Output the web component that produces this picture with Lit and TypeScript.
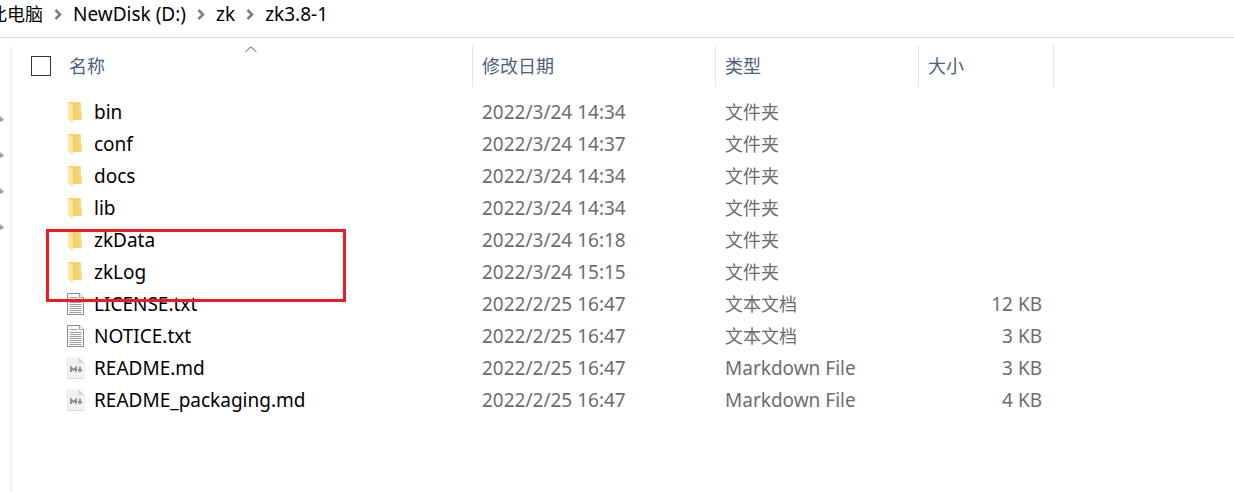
import { LitElement, html, css, svg } from "lit";
import { customElement } from "lit/decorators.js";

type Kind = "folder" | "text" | "markdown";
interface Entry {
  name: string;
  modified: string;
  kind: Kind;
  size?: string;
}

const TYPE_LABEL: Record<Kind, string> = {
  folder: "文件夹",
  text: "文本文档",
  markdown: "Markdown File",
};

const ENTRIES: Entry[] = [
  { name: "bin", modified: "2022/3/24 14:34", kind: "folder" },
  { name: "conf", modified: "2022/3/24 14:37", kind: "folder" },
  { name: "docs", modified: "2022/3/24 14:34", kind: "folder" },
  { name: "lib", modified: "2022/3/24 14:34", kind: "folder" },
  { name: "zkData", modified: "2022/3/24 16:18", kind: "folder" },
  { name: "zkLog", modified: "2022/3/24 15:15", kind: "folder" },
  { name: "LICENSE.txt", modified: "2022/2/25 16:47", kind: "text", size: "12 KB" },
  { name: "NOTICE.txt", modified: "2022/2/25 16:47", kind: "text", size: "3 KB" },
  { name: "README.md", modified: "2022/2/25 16:47", kind: "markdown", size: "3 KB" },
  { name: "README_packaging.md", modified: "2022/2/25 16:47", kind: "markdown", size: "4 KB" },
];

@customElement("file-icon")
class FileIcon extends LitElement {
  static properties = { kind: { type: String } };
  declare kind: Kind;
  static styles = css`
    :host { display: block; width: 20px; height: 24px; flex: none; }
    svg { display: block; }
  `;
  render() {
    const art = {
      folder: svg`
        <defs>
          <linearGradient id="back" x1="0" x2="1"><stop offset="0" stop-color="#ecc75e"/><stop offset="1" stop-color="#fadb80"/></linearGradient>
          <linearGradient id="front" x1="0" x2="1"><stop offset="0" stop-color="#ffe8a0"/><stop offset="1" stop-color="#fde49a"/></linearGradient>
        </defs>
        <path d="M1 2H14V11L15 12V20H5Z" fill="url(#back)"/>
        <path d="M1 2L6 4V22.600L4.500 22L1 19.500Z" fill="url(#front)"/>`,
      text: svg`
        <path d="M.5 1.500H13L16.500 5.500V22.500H.5Z" fill="#fbfbfb" stroke="#8b8b8b"/>
        <path d="M12.500 1.500V5.500H16.500" fill="#fff" stroke="#9b9b9b"/>
        <path d="M2.500 5.500H10.500M2.500 8.500H14.500M2.500 10.500H14.500M2.500 12.500H14.500M2.500 14.500H14.500M2.500 16.500H14.500M2.500 18.500H14.500M2.500 20.500H14.500" stroke="#9a9fa0" fill="none"/>`,
      markdown: svg`
        <path d="M1 2H12L17.500 7.500V22Q17.500 23 16.500 23H1Q0 23 0 22V3Q0 2 1 2Z" fill="#dfdfdf"/>
        <path d="M1.500 1H12L17 6.500V21Q17 22 16 22H1.500Q.5 22 .5 21V2Q.5 1 1.500 1Z" fill="#f2f2f2"/>
        <path d="M11.500 1.500V7H17Z" fill="#d4d4d4"/>
        <path d="M4 16V11.500L6.500 14L9 11.500V16" fill="none" stroke="#858585" stroke-width="1.700"/>
        <path d="M13 10.500V15M11 13.200L13 15.400L15 13.200" fill="none" stroke="#858585" stroke-width="1.400"/>`,
    }[this.kind];
    return html`<svg width="20" height="24" viewBox="0 0 20 24" aria-hidden="true">${art}</svg>`;
  }
}

@customElement("app-root")
class AppRoot extends LitElement {
  static styles = css`
    :host {
      display: flex;
      flex-direction: column;
      min-height: 100vh;
      overflow: hidden;
      background: #fff;
      color: #000;
      font: 19px/32px "Noto Sans", "Noto Sans CJK SC", sans-serif;
    }
    .zh { font-size: 18px; }
    .crumbs {
      display: flex;
      align-items: center;
      height: 38px;
      padding-bottom: 10px;
      box-sizing: border-box;
      border-bottom: 1px solid #d9d9d9;
      white-space: nowrap;
    }
    .crumbs a { color: inherit; text-decoration: none; }
    .crumbs a:first-child { margin-left: -11px; }
    .crumbs svg { margin: 0 10px 0 11px; flex: none; }
    .body { display: flex; flex: 1; padding-top: 7px; }
    .tree {
      width: 10px;
      flex: none;
      border-right: 2px solid #f5f5f5;
      display: flex;
      flex-direction: column;
      gap: 26px;
      padding-top: 69px;
      box-sizing: content-box;
    }
    .tree svg { display: block; height: 10px; }
    .list { position: relative; flex: 1; min-width: 0; }
    table { width: 100%; border-collapse: separate; border-spacing: 0; table-layout: fixed; }
    .c-name { width: 461px; }
    .c-date { width: 243px; }
    .c-type { width: 203px; }
    .c-size { width: 135px; }
    th, td { padding: 0 0 0 9px; text-align: left; font-weight: 400; white-space: nowrap; }
    th {
      height: 42px;
      border-right: 1px solid #e5e5e5;
      color: #4c607a;
      font-size: 18px;
    }
    th:last-child { border-right: 0; }
    th:first-child { position: relative; padding-left: 19px; }
    thead::after { content: ""; display: block; height: 9px; }
    td { height: 32px; color: #6d6d6d; }
    td:first-child { padding-left: 55px; color: #000; }
    td.size { text-align: right; padding: 0 12px 0 0; }
    .head { display: flex; align-items: center; gap: 18px; }
    input {
      appearance: none;
      width: 20px;
      height: 20px;
      margin: 0;
      border: 1px solid #333;
      background: #fff;
    }
    .sort { position: absolute; left: 50%; top: 1px; margin-left: 3px; }
    .entry { display: flex; align-items: center; gap: 7px; height: 32px; }
    .mark {
      position: absolute;
      left: 34px;
      top: 184px;
      width: 300px;
      height: 73px;
      box-sizing: border-box;
      border: 3px solid #ed1c24;
      pointer-events: none;
    }
  `;

  private separator() {
    return html`<svg width="9" height="12" viewBox="0 0 9 12" aria-hidden="true">
      <path d="M1.500 2L6 6.500L1.500 11" fill="none" stroke="#7d7d7d" stroke-width="2.500"/></svg>`;
  }

  render() {
    return html`
      <nav class="crumbs" aria-label="路径">
        <a class="zh" href="#pc">此电脑</a>${this.separator()}<a href="#d">NewDisk (D:)</a>${this.separator()}<a href="#zk">zk</a>${this.separator()}<a href="#zk38">zk3.8-1</a>
      </nav>
      <div class="body">
        <div class="tree">
          ${[0, 1, 2, 3].map(() => html`<svg width="5" height="10" viewBox="0 0 5 10" aria-hidden="true"><path d="M0 2L4 5.500L3 6.500L0 8Z" fill="#98a3aa"/></svg>`)}
        </div>
        <main class="list">
          <table>
            <colgroup><col class="c-name"><col class="c-date"><col class="c-type"><col class="c-size"><col></colgroup>
            <thead>
              <tr>
                <th scope="col">
                  <div class="head"><input type="checkbox" id="all" aria-label="全选"><label for="all">名称</label></div>
                  <svg class="sort" width="12" height="7" viewBox="0 0 12 7" aria-hidden="true"><path d="M.5 6L6 .8L11.500 6" fill="none" stroke="#5f5f5f"/></svg>
                </th>
                <th scope="col">修改日期</th>
                <th scope="col">类型</th>
                <th scope="col">大小</th>
                <th></th>
              </tr>
            </thead>
            <tbody>
              ${ENTRIES.map((e) => html`<tr>
                <td><div class="entry"><file-icon .kind=${e.kind}></file-icon><span>${e.name}</span></div></td>
                <td>${e.modified}</td>
                <td class=${e.kind === "markdown" ? "" : "zh"}>${TYPE_LABEL[e.kind]}</td>
                <td class="size">${e.size ?? ""}</td>
                <td></td>
              </tr>`)}
            </tbody>
          </table>
          <div class="mark"></div>
        </main>
      </div>
    `;
  }
}
